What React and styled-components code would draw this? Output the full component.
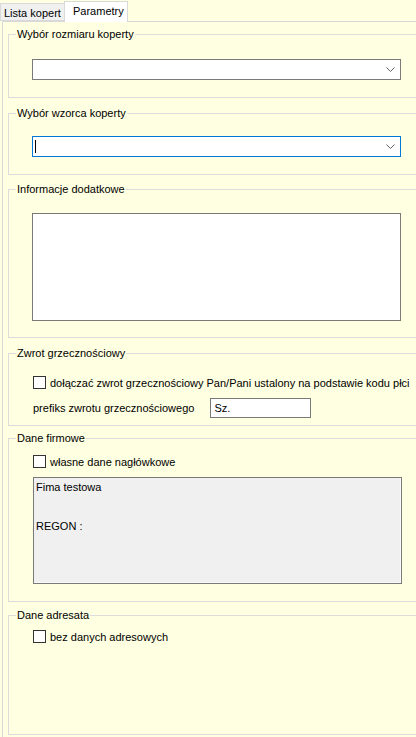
import styled, { createGlobalStyle } from 'styled-components'

const GlobalStyle = createGlobalStyle`
	html, body {
		margin: 0;
		padding: 0;
		background: #ffffe1;
	}
	body {
		font-family: 'Liberation Sans', Arial, sans-serif;
		font-size: 11px;
		color: #000;
	}
`

const Page = styled.div`
	width: 416px;
	height: 737px;
	overflow: hidden;
	background: #ffffe1;
	display: flex;
	flex-direction: column;
`

const TabStrip = styled.div`
	display: flex;
	align-items: flex-end;
	height: 21px;
	position: relative;
	z-index: 1;
`

const Tab = styled.div`
	box-sizing: border-box;
	width: ${({ $w }) => $w}px;
	height: ${({ $active }) => ($active ? '21px' : '18px')};
	padding: ${({ $active }) => ($active ? '2px 0 0 8px' : '2px 0 0 3px')};
	margin-bottom: ${({ $active }) => ($active ? '-1px' : '0')};
	margin-left: ${({ $active }) => ($active ? '-1px' : '0')};
	background: ${({ $active }) => ($active ? '#fff' : '#f0f0f0')};
	border: 1px solid #d9d9d9;
	border-bottom: ${({ $active }) => ($active ? 'none' : '1px solid #d9d9d9')};
	font-size: 11px;
	line-height: 14px;
	white-space: nowrap;
	overflow: hidden;
`

const Panel = styled.div`
	flex: 1;
	margin-left: 2px;
	border-top: 1px solid #d9d9d9;
	border-left: 1px solid #d9d9d9;
	padding: 6px 0 0 5px;
	display: flex;
	flex-direction: column;
`

const Group = styled.fieldset`
	box-sizing: border-box;
	height: ${({ $h }) => $h}px;
	margin: ${({ $mt }) => $mt || 0}px -20px 0 0;
	padding: 0 0 0 23px;
	border: 1px solid #dcdcdc;
	border-right: none;
	min-width: 0;
	display: flex;
	flex-direction: column;
	align-items: flex-start;
`

const Legend = styled.legend`
	padding: 0 1px;
	margin-left: -16px;
	line-height: 13px;
	white-space: nowrap;
`

const Combo = styled.div`
	box-sizing: border-box;
	width: 369px;
	height: 21px;
	margin-top: ${({ $mt }) => $mt}px;
	background: #fff;
	border: 1px solid ${({ $focus }) => ($focus ? '#0078d7' : '#7a7a7a')};
	display: flex;
	align-items: center;
	padding: 0 5px 0 2px;
`

const Caret = styled.span`
	width: 1px;
	height: 13px;
	background: #000;
`

const Chevron = styled.svg`
	margin-left: auto;
`

const Memo = styled.div`
	box-sizing: border-box;
	width: 369px;
	height: 108px;
	margin-top: ${({ $mt }) => $mt}px;
	background: #fff;
	border: 1px solid #7a7a7a;
`

const Row = styled.div`
	display: flex;
	align-items: center;
	margin-top: ${({ $mt }) => $mt || 0}px;
	margin-left: ${({ $ml }) => $ml || 0}px;
	white-space: nowrap;
`

const Box = styled.span`
	box-sizing: border-box;
	width: 13px;
	height: 13px;
	border: 1px solid #333;
	background: #fff;
	margin-right: 4px;
	flex: none;
`

const Edit = styled.div`
	box-sizing: border-box;
	width: 101px;
	height: 20px;
	margin-left: ${({ $ml }) => $ml}px;
	background: #fff;
	border: 1px solid #7a7a7a;
	padding: 2px 0 0 3px;
	line-height: 14px;
`

const InfoBox = styled.div`
	box-sizing: border-box;
	width: 369px;
	height: 107px;
	margin: ${({ $mt }) => $mt}px 0 0 1px;
	background: #f0f0f0;
	border: 1px solid #7a7a7a;
	box-shadow: inset -1px -1px 0 #fafafa;
	padding: 3px 0 0 2px;
	line-height: 13px;
`

const InfoLine = styled.div`
	margin-bottom: ${({ $mb }) => $mb || 0}px;
`

const ChevronIcon = () => (
	<Chevron width="9" height="5" viewBox="0 0 9 5">
		<path d="M0.5 0.5 L4.5 4.5 L8.5 0.5" fill="none" stroke="#606060" strokeWidth="1" />
	</Chevron>
)

export default function App() {
	return (
		<Page>
			<GlobalStyle />
			<TabStrip>
				<Tab $w={65}>Lista kopert</Tab>
				<Tab $w={64} $active>Parametry</Tab>
			</TabStrip>
			<Panel>
				<Group $h={70}>
					<Legend>Wybór rozmiaru koperty</Legend>
					<Combo $mt={18}>
						<ChevronIcon />
					</Combo>
				</Group>
				<Group $h={68} $mt={9}>
					<Legend>Wybór wzorca koperty</Legend>
					<Combo $mt={16} $focus>
						<Caret />
						<ChevronIcon />
					</Combo>
				</Group>
				<Group $h={155} $mt={8}>
					<Legend>Informacje dodatkowe</Legend>
					<Memo $mt={17} />
				</Group>
				<Group $h={79} $mt={9}>
					<Legend>Zwrot grzecznościowy</Legend>
					<Row $mt={16} $ml={1}>
						<Box />
						dołączać zwrot grzecznościowy Pan/Pani ustalony na podstawie kodu płci
					</Row>
					<Row $mt={9} $ml={1}>
						prefiks zwrotu grzecznościowego
						<Edit $ml={16}>Sz.</Edit>
					</Row>
				</Group>
				<Group $h={170} $mt={6}>
					<Legend>Dane firmowe</Legend>
					<Row $mt={10} $ml={1}>
						<Box />
						własne dane nagłówkowe
					</Row>
					<InfoBox $mt={9}>
						<InfoLine $mb={26}>Fima testowa</InfoLine>
						<InfoLine>REGON :</InfoLine>
					</InfoBox>
				</Group>
				<Group $h={126} $mt={7}>
					<Legend>Dane adresata</Legend>
					<Row $mt={8} $ml={1}>
						<Box />
						bez danych adresowych
					</Row>
				</Group>
			</Panel>
		</Page>
	)
}
